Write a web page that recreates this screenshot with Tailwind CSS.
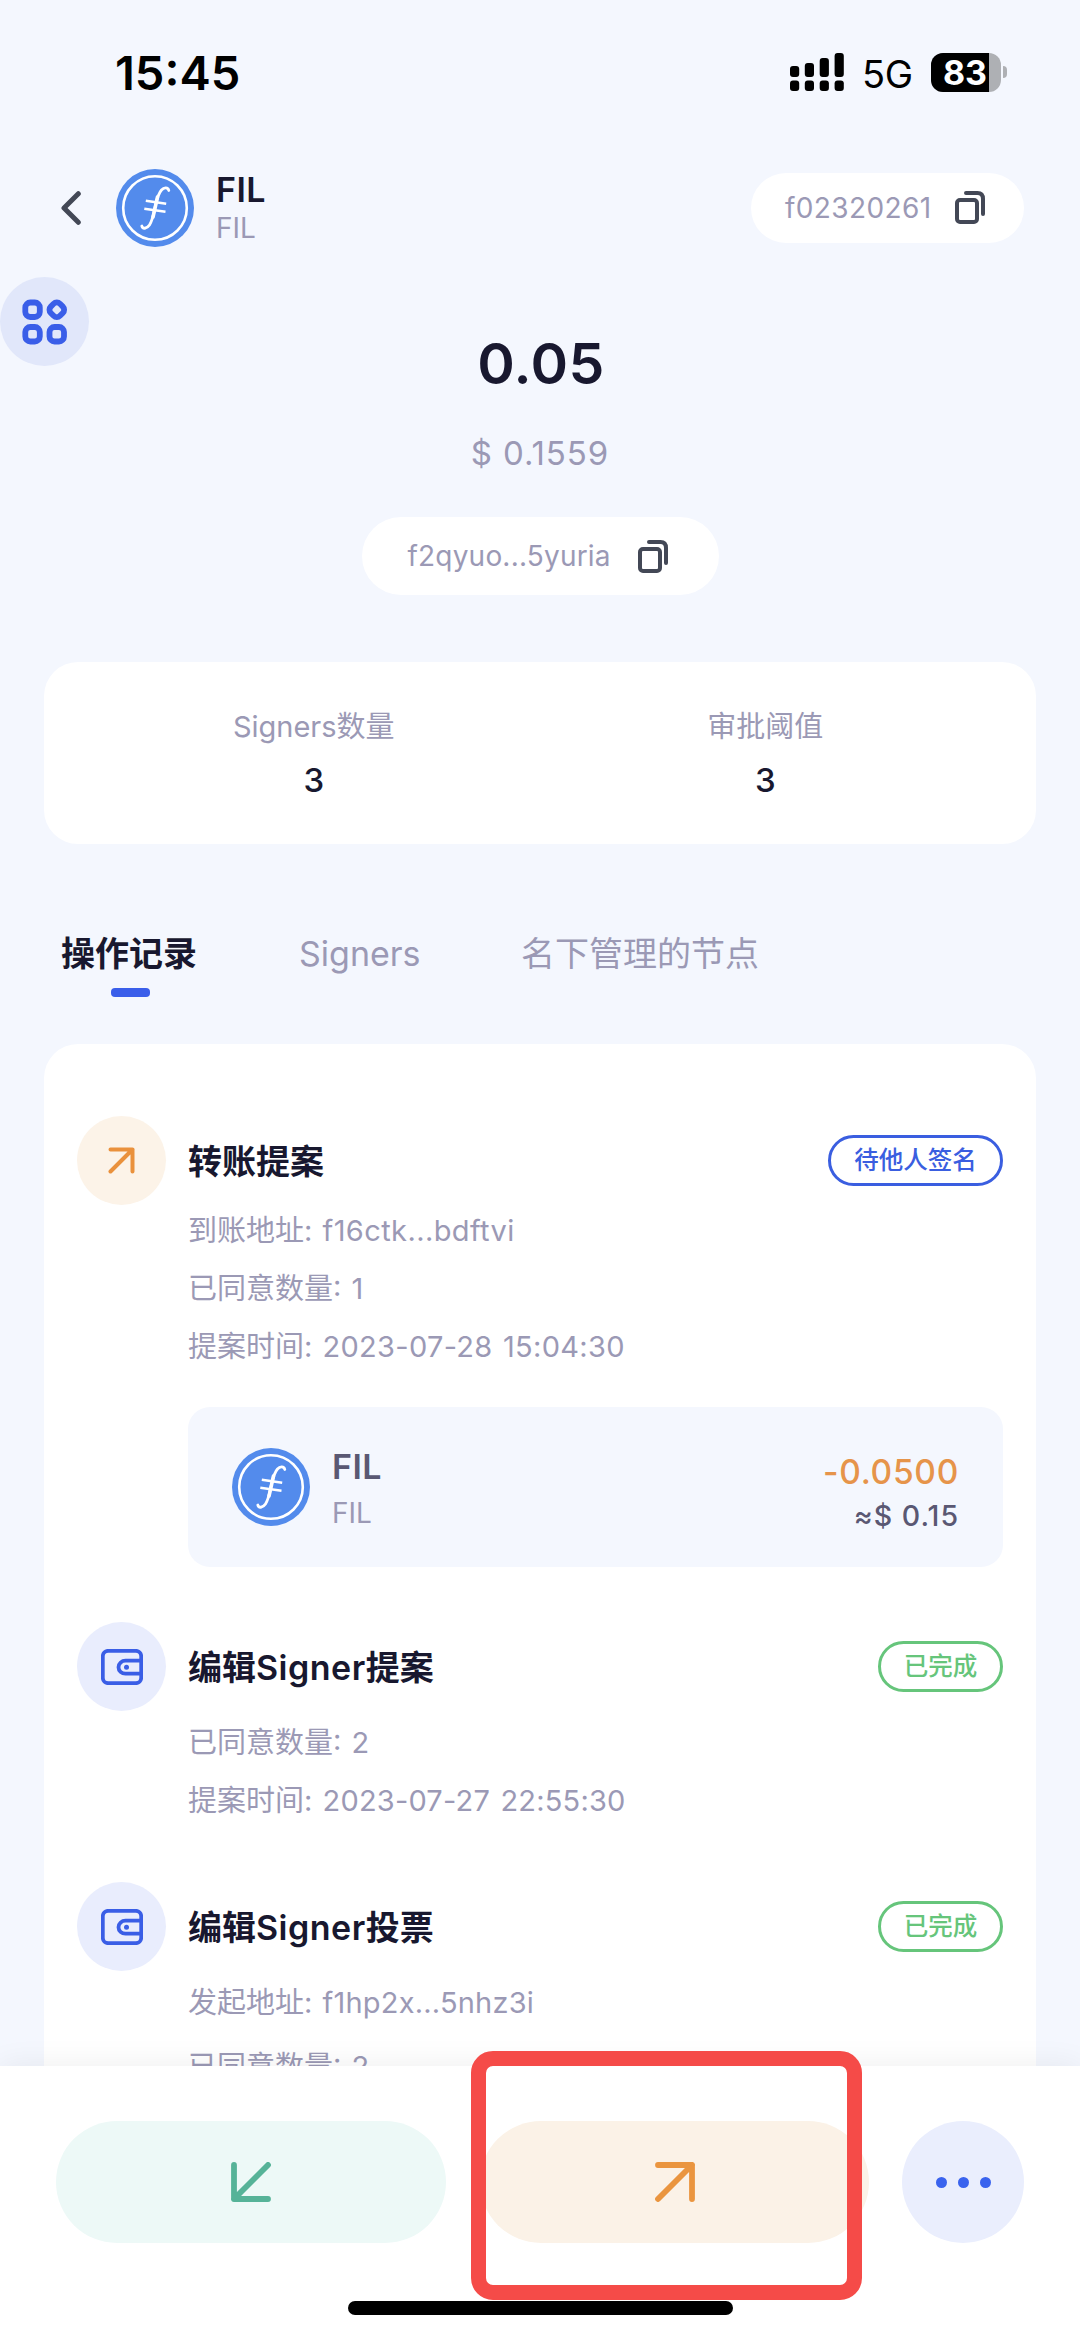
<!DOCTYPE html>
<html lang="zh-CN">
<head>
<meta charset="utf-8">
<title>FIL</title>
<script src="https://cdn.jsdelivr.net/npm/@tailwindcss/browser@4"></script>
</head>
<body class="bg-[#f4f7fe]">
<svg class="hidden">
  <symbol id="fil" viewBox="0 0 78 78">
    <circle cx="39" cy="39" r="39" fill="#538bec"/>
    <circle cx="39" cy="39" r="31.8" fill="none" stroke="#fff" stroke-width="2.6"/>
    <path d="M52.800 21.500C52 18.200 48 18.200 45.500 21C42 25 41 30 39.300 37C37.600 44.500 36.800 51 33.500 56C30.800 60 26.500 60.300 25.800 57" fill="none" stroke="#fff" stroke-width="2.800" stroke-linecap="round"/>
    <path d="M41.500 28C40.500 32 38.500 42 37 48" fill="none" stroke="#fff" stroke-width="3.600" stroke-linecap="round"/>
    <path d="M29.800 31.700L50.200 34.700M28.300 39.700L49.500 42.700" stroke="#fff" stroke-width="2.500"/>
  </symbol>
  <symbol id="copy" viewBox="0 0 30 33">
    <rect x="2" y="9" width="20" height="22" rx="3" fill="none" stroke="#434856" stroke-width="4"/>
    <path d="M11 2H22.500Q28 2 28 8V23" fill="none" stroke="#434856" stroke-width="4" stroke-linecap="round"/>
  </symbol>
  <symbol id="wallet" viewBox="0 0 42 36">
    <rect x="1.800" y="1.800" width="38.400" height="32.400" rx="5.500" fill="none" stroke="#3a5ee6" stroke-width="3.800"/>
    <path d="M39 11.700H24.500a7 6.500 0 0 0-7 6.500a7 6.500 0 0 0 7 6.500H39" fill="none" stroke="#3a5ee6" stroke-width="3.800"/>
    <circle cx="25.500" cy="18.200" r="2.500" fill="#3a5ee6"/>
  </symbol>
</svg>

<div class="relative flex h-[2337px] w-[1080px] flex-col overflow-hidden bg-[#f4f7fe] font-['Inter','Noto_Sans_CJK_SC',sans-serif] text-[#18182f]">
  <main class="h-[2066px] shrink-0 overflow-hidden">
    <!-- status bar -->
    <div class="flex h-[144px] items-center justify-between pl-[115px] pr-[73px]">
      <div class="text-[47px] font-semibold leading-none text-black">15:45</div>
      <div class="flex items-center">
        <svg class="h-[38px] w-[54px]" viewBox="0 0 54 38">
          <rect x="0" y="13" width="9.200" height="11" rx="3"/><rect x="14.800" y="10" width="9.200" height="14" rx="3"/><rect x="29.700" y="5" width="9.200" height="19" rx="3"/><rect x="44.600" y="0" width="9.200" height="24" rx="3"/>
          <rect x="0" y="27.500" width="9.200" height="10.500" rx="3"/><rect x="14.800" y="27.500" width="9.200" height="10.500" rx="3"/><rect x="29.700" y="27.500" width="9.200" height="10.500" rx="3"/><rect x="44.600" y="27.500" width="9.200" height="10.500" rx="3"/>
        </svg>
        <span class="ml-[18px] w-[50px] pt-[3px] text-[38px] leading-none tracking-[-0.300px] text-black">5G</span>
        <div class="ml-[19px] flex h-[39px] w-[70px] rounded-[12px] bg-[#aeb0b4]">
          <div class="flex w-[58px] items-center justify-end rounded-l-[12px] bg-black pr-[2px] text-[34px] font-bold leading-[39px] text-white">83</div>
        </div>
        <div class="ml-[2px] h-[12px] w-[4px] rounded-r-full bg-[#aeb0b4]"></div>
      </div>
    </div>

    <!-- header -->
    <header class="mt-[24px] flex h-[79px] items-center pl-[61px] pr-[56px]">
      <svg class="h-[34px] w-[20px]" viewBox="0 0 20 34"><path d="M17.300 2.700L3 17L17.300 31.300" fill="none" stroke="#434856" stroke-width="5" stroke-linecap="round" stroke-linejoin="round"/></svg>
      <svg class="ml-[35px] size-[78px]"><use href="#fil"/></svg>
      <div class="ml-[22px]">
        <div class="mt-[2px] text-[34px] font-semibold leading-[38px] tracking-[0.400px]">FIL</div>
        <div class="text-[28px] leading-[38px] text-[#9b99b5]">FIL</div>
      </div>
      <div class="ml-auto flex h-[70px] w-[273px] items-center rounded-full bg-white pl-[34px]">
        <span class="w-[170px] text-[28px] tracking-[0.400px] text-[#9b99b5]">f02320261</span>
        <svg class="h-[33px] w-[30px]"><use href="#copy"/></svg>
      </div>
    </header>

    <!-- balance -->
    <section class="mt-[78px] flex flex-col items-center">
      <div class="pl-[2px] text-[57px] font-semibold leading-[78px] tracking-[0.400px]">0.05</div>
      <div class="mt-[30px] text-[33px] leading-[40px] tracking-[0.900px] text-[#9b99b5]">$ 0.1559</div>
      <div class="mt-[44px] flex h-[78px] w-[357px] items-center rounded-full bg-white pl-[46px]">
        <span class="w-[230px] text-[28px] tracking-[0.200px] text-[#9b99b5]">f2qyuo...5yuria</span>
        <svg class="h-[33px] w-[30px]"><use href="#copy"/></svg>
      </div>
    </section>

    <!-- signer summary -->
    <section class="mx-[44px] mt-[67px] flex h-[182px] rounded-[34px] bg-white pl-[44px] pr-[45px] pt-[45px] text-center">
      <div class="flex-1">
        <div class="text-[29px] leading-[40px] text-[#9b99b5]">Signers数量</div>
        <div class="mt-[13px] text-[33px] font-medium leading-[40px]">3</div>
      </div>
      <div class="flex-1">
        <div class="text-[29px] leading-[40px] text-[#9b99b5]">审批阈值</div>
        <div class="mt-[13px] text-[33px] font-medium leading-[40px]">3</div>
      </div>
    </section>

    <!-- tabs -->
    <nav class="mt-[86px] flex h-[114px] pl-[61px] text-[34px] leading-[48px] text-[#9b99b5]">
      <div class="flex w-[238px] flex-col items-start font-bold text-[#18182f]">
        <span>操作记录</span>
        <span class="ml-[50px] mt-[10px] h-[9px] w-[39px] rounded-[4px] bg-[#3a5eea]"></span>
      </div>
      <div class="w-[222px]">Signers</div>
      <div>名下管理的节点</div>
    </nav>

    <!-- records -->
    <section class="mx-[44px] h-[1100px] rounded-t-[34px] bg-white pl-[33px] pr-[33px] pt-[72px]">
      <article class="flex">
        <div class="flex size-[89px] shrink-0 items-center justify-center rounded-full bg-[#fcf3e8]">
          <svg class="size-[27px]" viewBox="0 0 27 27"><path d="M2.500 2.500H24.500V24.500M24.500 2.500L2.500 24.500" fill="none" stroke="#ea913c" stroke-width="4" stroke-linecap="round" stroke-linejoin="round"/></svg>
        </div>
        <div class="ml-[22px] flex-1">
          <div class="flex h-[89px] items-center justify-between">
            <h2 class="pt-[2px] text-[34px] font-bold">转账提案</h2>
            <span class="flex h-[51px] w-[175px] items-center justify-center rounded-full border-[3px] border-[#3a5ee0] text-[24.500px] font-medium text-[#3a5ee0]">待他人签名</span>
          </div>
          <div class="-mt-[3px] text-[29px] leading-[58px] text-[#9b99b5] [word-spacing:2px]">
            <p>到账地址: <span class="tracking-[0.400px]">f16ctk...bdftvi</span></p>
            <p>已同意数量: 1</p>
            <p>提案时间: <span class="tracking-[0.300px]">2023-07-28 15:04:30</span></p>
          </div>
          <div class="mt-[31px] flex h-[160px] items-center rounded-[22px] bg-[#f4f7fe] px-[44px]">
            <svg class="size-[78px]"><use href="#fil"/></svg>
            <div class="ml-[22px] pt-[6px]">
              <div class="text-[34px] font-semibold leading-[46px] tracking-[0.400px] text-[#5a5873]">FIL</div>
              <div class="text-[28px] leading-[46px] text-[#9b99b5]">FIL</div>
            </div>
            <div class="ml-auto pt-[14px] text-right">
              <div class="text-[33.500px] font-medium leading-[44px] tracking-[0.700px] text-[#e6944a]">-0.0500</div>
              <div class="text-[28.500px] font-medium leading-[44px] tracking-[1px] text-[#5a5873]">≈$ 0.15</div>
            </div>
          </div>
        </div>
      </article>

      <article class="mt-[55px] flex">
        <div class="flex size-[89px] shrink-0 items-center justify-center rounded-full bg-[#e9edfd]">
          <svg class="h-[36px] w-[42px]"><use href="#wallet"/></svg>
        </div>
        <div class="ml-[22px] flex-1">
          <div class="flex h-[89px] items-center justify-between">
            <h2 class="pt-[2px] text-[34px] font-bold">编辑<span class="font-semibold tracking-[0.500px]">Signer</span>提案</h2>
            <span class="flex h-[51px] w-[125px] items-center justify-center rounded-full border-[3px] border-[#66c57b] text-[24.500px] font-medium text-[#66c57b]">已完成</span>
          </div>
          <div class="mt-[3px] text-[29px] leading-[58px] text-[#9b99b5] [word-spacing:2px]">
            <p>已同意数量: 2</p>
            <p>提案时间: <span class="tracking-[0.200px]">2023-07-27 22:55:30</span></p>
          </div>
        </div>
      </article>

      <article class="mt-[52px] flex">
        <div class="flex size-[89px] shrink-0 items-center justify-center rounded-full bg-[#e9edfd]">
          <svg class="h-[36px] w-[42px]"><use href="#wallet"/></svg>
        </div>
        <div class="ml-[22px] flex-1">
          <div class="flex h-[89px] items-center justify-between">
            <h2 class="pt-[2px] text-[34px] font-bold">编辑<span class="font-semibold tracking-[0.500px]">Signer</span>投票</h2>
            <span class="flex h-[51px] w-[125px] items-center justify-center rounded-full border-[3px] border-[#66c57b] text-[24.500px] font-medium text-[#66c57b]">已完成</span>
          </div>
          <div class="mt-[3px] text-[29px] leading-[58px] text-[#9b99b5] [word-spacing:2px]">
            <p>发起地址: <span class="tracking-[0.200px]">f1hp2x...5nhz3i</span></p>
            <p class="mt-[6px]">已同意数量: 2</p>
          </div>
        </div>
      </article>
    </section>
  </main>

  <!-- bottom actions -->
  <footer class="relative flex h-[271px] shrink-0 flex-col items-center bg-white shadow-[0_0_30px_rgba(0,0,0,0.07)]">
    <div class="mt-[55px] flex w-full px-[56px]">
      <div class="flex h-[122px] w-[390px] items-center justify-center rounded-full bg-[#edf9f7]">
        <svg class="size-[40px]" viewBox="0 0 40 40"><path d="M3 3V37H37M3 37L37 3" fill="none" stroke="#56b398" stroke-width="5.800" stroke-linecap="round" stroke-linejoin="round"/></svg>
      </div>
      <div class="ml-[34px] flex h-[122px] w-[389px] items-center justify-center rounded-full bg-[#fbf2e7]">
        <svg class="size-[40px]" viewBox="0 0 40 40"><path d="M3 3H37V37M37 3L3 37" fill="none" stroke="#ea953f" stroke-width="5.800" stroke-linecap="round" stroke-linejoin="round"/></svg>
      </div>
      <div class="ml-auto flex size-[122px] items-center justify-center gap-[11px] rounded-full bg-[#eaeefd]">
        <i class="size-[11px] rounded-full bg-[#3a63ee]"></i><i class="size-[11px] rounded-full bg-[#3a63ee]"></i><i class="size-[11px] rounded-full bg-[#3a63ee]"></i>
      </div>
    </div>
    <div class="mt-[58px] h-[14px] w-[385px] rounded-full bg-black"></div>
  </footer>

  <!-- floating shortcut -->
  <div class="absolute left-0 top-[277px] flex size-[89px] items-center justify-center rounded-full bg-[#e1e7fa]">
    <svg class="h-[46px] w-[46px]" viewBox="0 0 46 46" fill="none" stroke="#3a5ee8" stroke-width="5.800">
      <rect x="3.300" y="3.500" width="14.500" height="14.500" rx="5"/><rect x="3.300" y="28" width="14.500" height="14.500" rx="5"/><rect x="27.500" y="28" width="14.500" height="14.500" rx="5"/>
      <rect x="28.300" y="4.300" width="13" height="13" rx="4.500" transform="rotate(45 34.800 10.800)"/>
    </svg>
  </div>

  <!-- highlighted action -->
  <div class="absolute left-[471px] top-[2051px] h-[249px] w-[391px] rounded-[22px] border-[15px] border-[#f54b48]"></div>
</div>
</body>
</html>
